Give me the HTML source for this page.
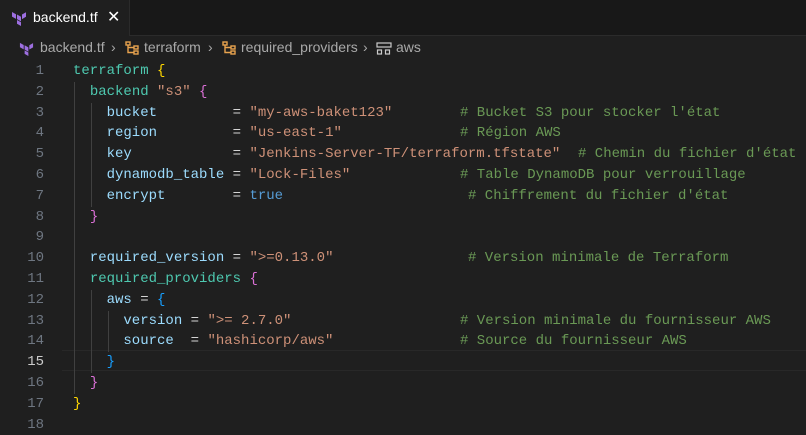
<!DOCTYPE html>
<html><head><meta charset="utf-8"><style>
body{margin:0;width:806px;height:435px;background:#1f1f1f;overflow:hidden;font-family:"Liberation Sans",sans-serif;position:relative}
.tabbar{position:absolute;left:0;top:0;width:806px;height:35px;background:#181818;border-bottom:1px solid #2b2b2b}
.tab{position:absolute;left:0;top:0;width:129px;height:36px;background:#1f1f1f;border-right:1px solid #2b2b2b;color:#fff;font-size:14px}
.tab span{position:absolute;left:33px;top:9px}
.tab .x{left:107px;top:7px;font-size:16px}
.bc{position:absolute;left:0;top:38px;height:20px;color:#a9a9a9;font-size:14px;white-space:nowrap}
.bc span{position:absolute;top:1px}
.ln{position:absolute;left:0;width:44px;text-align:right;color:#6e7681;font:14px "Liberation Mono",monospace;line-height:20.8px}
.code{position:absolute;left:73px;font:14px "Liberation Mono",monospace;line-height:20.8px;white-space:pre;color:#9cdcfe}
.cm{position:absolute;font:14px "Liberation Mono",monospace;line-height:20.8px;white-space:pre;color:#6a9955}
.k{color:#4ec9b0}.s{color:#ce9178}.t{color:#569cd6}.y{color:#ffd700}.p{color:#da70d6}.b{color:#179fff}.w{color:#d4d4d4}
.g{position:absolute;width:1px;background:#404040}
.cur{position:absolute;left:62px;top:350px;width:744px;height:19px;border-top:1px solid #282828;border-bottom:1px solid #282828}
</style></head><body>
<div class="tabbar"><div class="tab">
<svg style="position:absolute;left:11px;top:10px" width="16" height="16" viewBox="0 0 16 16"><path d="M1 2l4 2.3v4.6L1 6.6z M6 4.5l4 2.3v4.6L6 9.1z M11 4.5l4-2.3v4.6l-4 2.3z M6 10l4 2.3V16L6 13.7z" fill="#9d6fe0"/></svg>
<span>backend.tf</span><span class="x">✕</span></div></div>
<div class="bc">
<svg style="position:absolute;left:19px;top:3px" width="15" height="15" viewBox="0 0 16 16"><path d="M1 2l4 2.3v4.6L1 6.6z M6 4.5l4 2.3v4.6L6 9.1z M11 4.5l4-2.3v4.6l-4 2.3z M6 10l4 2.3V16L6 13.7z" fill="#9d6fe0"/></svg>
<span style="left:40px">backend.tf</span><span style="left:111px">›</span>
<svg style="position:absolute;left:125px;top:3px" width="15" height="14" viewBox="0 0 15 14" fill="none" stroke="#e8a34f" stroke-width="1.4"><rect x="1" y="1" width="4" height="3"/><rect x="9" y="5" width="4" height="3"/><rect x="9" y="10" width="4" height="3"/><path d="M3 4v7.5h6M3 6.5h6"/></svg>
<span style="left:144px">terraform</span><span style="left:208px">›</span>
<svg style="position:absolute;left:222px;top:3px" width="15" height="14" viewBox="0 0 15 14" fill="none" stroke="#e8a34f" stroke-width="1.4"><rect x="1" y="1" width="4" height="3"/><rect x="9" y="5" width="4" height="3"/><rect x="9" y="10" width="4" height="3"/><path d="M3 4v7.5h6M3 6.5h6"/></svg>
<span style="left:241px">required_providers</span><span style="left:363px">›</span>
<svg style="position:absolute;left:376px;top:4px" width="16" height="13" viewBox="0 0 16 13" fill="none" stroke="#cccccc" stroke-width="1.2"><rect x="1" y="1" width="14" height="4"/><rect x="1.5" y="8" width="4" height="4"/><rect x="9.5" y="8" width="4" height="4"/></svg>
<span style="left:396px">aws</span>
</div>
<div class="cur"></div>
<div class="g" style="left:74px;top:82px;height:312px"></div>
<div class="g" style="left:91px;top:103px;height:104px"></div>
<div class="g" style="left:91px;top:290px;height:83px"></div>
<div class="g" style="left:108px;top:311px;height:41px"></div>
<div class="ln" style="top:61px">1<br>2<br>3<br>4<br>5<br>6<br>7<br>8<br>9<br>10<br>11<br>12<br>13<br>14<br><span style="color:#ccc">15</span><br>16<br>17<br>18</div>
<div class="code" style="top:61px"><span class="k">terraform</span> <span class="y">{</span>
  <span class="k">backend</span> <span class="s">"s3"</span> <span class="p">{</span>
    bucket         <span class="w">=</span> <span class="s">"my-aws-baket123"</span>
    region         <span class="w">=</span> <span class="s">"us-east-1"</span>
    key            <span class="w">=</span> <span class="s">"Jenkins-Server-TF/terraform.tfstate"</span>
    dynamodb_table <span class="w">=</span> <span class="s">"Lock-Files"</span>
    encrypt        <span class="w">=</span> <span class="t">true</span>
  <span class="p">}</span>

  required_version <span class="w">=</span> <span class="s">"&gt;=0.13.0"</span>
  <span class="k">required_providers</span> <span class="p">{</span>
    aws <span class="w">=</span> <span class="b">{</span>
      version <span class="w">=</span> <span class="s">"&gt;= 2.7.0"</span>
      source  <span class="w">=</span> <span class="s">"hashicorp/aws"</span>
    <span class="b">}</span>
  <span class="p">}</span>
<span class="y">}</span>
</div>
<div class="cm" style="left:460px;top:102.6px"># Bucket S3 pour stocker l'état</div>
<div class="cm" style="left:460px;top:123.4px"># Région AWS</div>
<div class="cm" style="left:578px;top:144.2px"># Chemin du fichier d'état</div>
<div class="cm" style="left:460px;top:165px"># Table DynamoDB pour verrouillage</div>
<div class="cm" style="left:468px;top:185.8px"># Chiffrement du fichier d'état</div>
<div class="cm" style="left:468px;top:248.2px"># Version minimale de Terraform</div>
<div class="cm" style="left:460px;top:310.6px"># Version minimale du fournisseur AWS</div>
<div class="cm" style="left:460px;top:331.4px"># Source du fournisseur AWS</div>
</body></html>
